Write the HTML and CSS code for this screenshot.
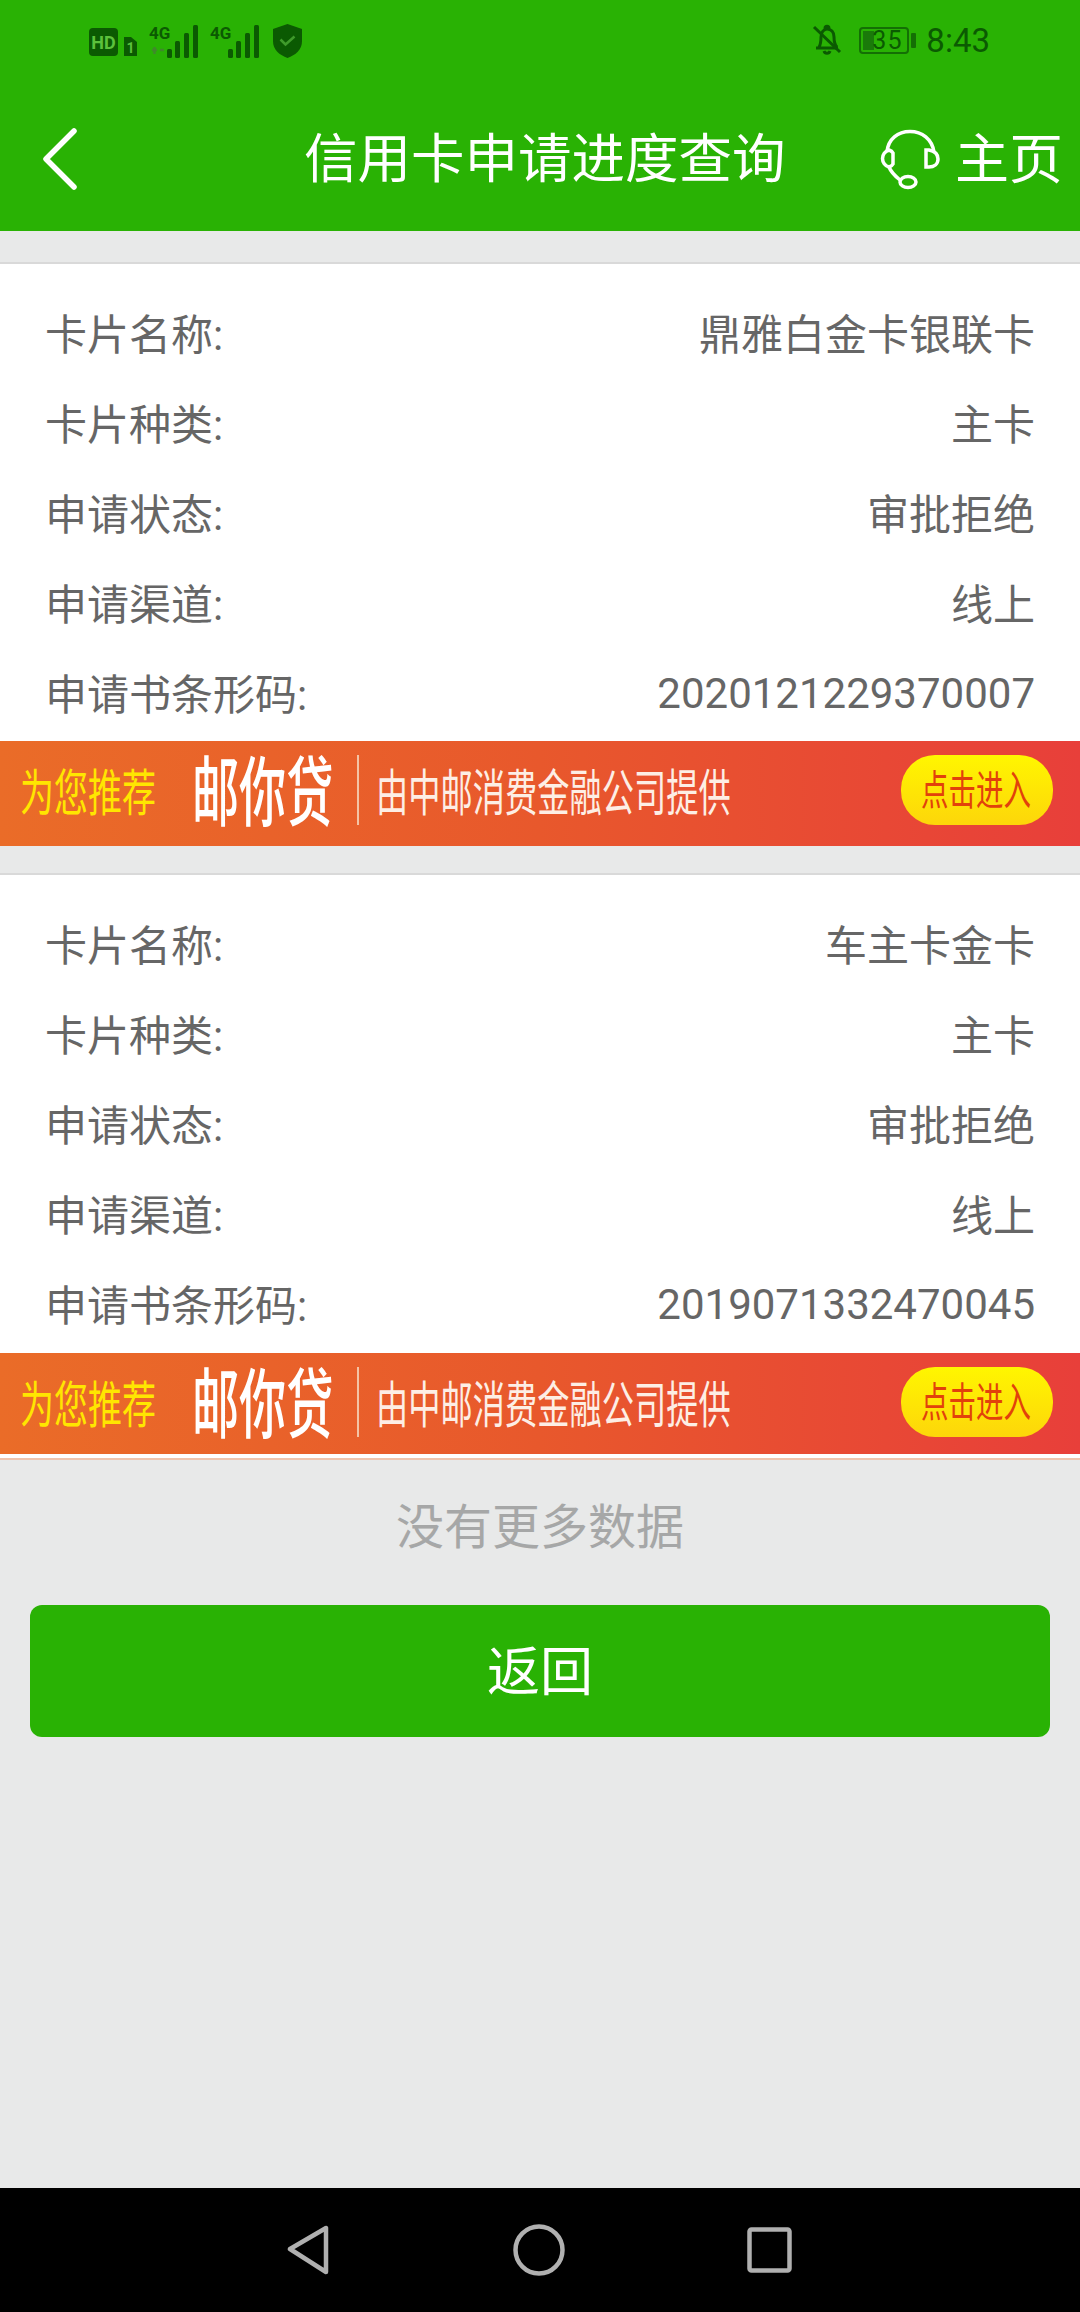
FILE: index.html
```html
<!DOCTYPE html>
<html lang="zh">
<head>
<meta charset="utf-8">
<title>信用卡申请进度查询</title>
<link rel="stylesheet" href="styles.css">
</head>
<body>
<header class="header">
  <div class="status">
    <div class="status-left">
      <svg class="i-hd" width="48" height="30" viewBox="0 0 48 30">
        <rect x="0" y="1" width="29" height="28" rx="4" fill="#0b5a02"/>
        <text x="14.500" y="22" class="hd-text">HD</text>
        <path d="M35 10h7l6 5v14h-13z" fill="#0b5a02"/>
        <text x="41.500" y="26" class="sim-text">1</text>
      </svg>
      <svg class="i-sig" width="52" height="34" viewBox="0 0 52 34">
        <text x="0" y="15" class="sig-text">4G</text>
        <path d="M3 26h5M5.500 23v7M11 26h4" stroke="#3f8a2b" stroke-width="2.500" fill="none"/>
        <g fill="#0b5a02"><rect x="18" y="25" width="5" height="9" rx="1.500"/><rect x="26" y="17" width="5" height="17" rx="1.500"/><rect x="35" y="9" width="5" height="25" rx="1.500"/><rect x="44" y="1" width="5" height="33" rx="1.500"/></g>
      </svg>
      <svg class="i-sig" width="52" height="34" viewBox="0 0 52 34">
        <text x="0" y="15" class="sig-text">4G</text>
        <g fill="#0b5a02"><rect x="18" y="25" width="5" height="9" rx="1.500"/><rect x="26" y="17" width="5" height="17" rx="1.500"/><rect x="35" y="9" width="5" height="25" rx="1.500"/><rect x="44" y="1" width="5" height="33" rx="1.500"/></g>
      </svg>
      <svg class="i-shield" width="29" height="34" viewBox="0 0 29 34">
        <path d="M14.500 0L29 5v12c0 9-6.500 14-14.500 17C6.500 31 0 26 0 17V5z" fill="#0b5a02"/>
        <path d="M7.500 15.500l5 5 9-8" fill="none" stroke="#3f9a2b" stroke-width="2.500"/>
      </svg>
    </div>
    <div class="status-right">
      <svg width="30" height="32" viewBox="0 0 30 32">
        <path d="M4 24h22M7 23c2-3 2-6 2-10 0-5 3-8 6-8 4 0 7 3 7 8 0 4 0 7 3 10M13 4.500c0-3 4-3 4 0M12 27c1 3 5 3 6 0" fill="none" stroke="#0b5a02" stroke-width="3"/>
        <path d="M2 3l26 25" stroke="#0b5a02" stroke-width="3"/>
      </svg>
      <div class="battery">
        <div class="battery-fill"></div>
        <span class="battery-num">35</span>
      </div>
      <div class="battery-nub"></div>
      <span class="clock">8:43</span>
    </div>
  </div>
  <nav class="topnav">
    <svg class="back" width="40" height="66" viewBox="0 0 40 66">
      <path d="M36 5L8 33l28 28" fill="none" stroke="#fff" stroke-width="5.500" stroke-linecap="round" stroke-linejoin="round"/>
    </svg>
    <h1 class="title">信用卡申请进度查询</h1>
    <div class="home">
      <svg width="62" height="62" viewBox="0 0 62 62">
        <path d="M7 23C8 10 18 2.500 30 2.500S52 10 54 23" fill="none" stroke="#fff" stroke-width="3.500"/>
        <path d="M9 21C5 22 2.500 26 2.500 29.500S5 37 9 38c3-1 4-3 4-3V24s-1-2-4-3zM46 21h3c5 1 9 4 9 9s-4 8-9 8h-3z" fill="none" stroke="#fff" stroke-width="3.500"/>
        <path d="M9 38c2 5 6 9 11 13" fill="none" stroke="#fff" stroke-width="3.500"/>
        <ellipse cx="28" cy="53" rx="8" ry="5.500" fill="none" stroke="#fff" stroke-width="3.500"/>
      </svg>
      <span class="home-text">主页</span>
    </div>
  </nav>
</header>

<main class="main">
  <section class="card">
    <div class="row"><span>卡片名称:</span><span>鼎雅白金卡银联卡</span></div>
    <div class="row"><span>卡片种类:</span><span>主卡</span></div>
    <div class="row"><span>申请状态:</span><span>审批拒绝</span></div>
    <div class="row"><span>申请渠道:</span><span>线上</span></div>
    <div class="row"><span>申请书条形码:</span><span class="num">2020121229370007</span></div>
    <div class="banner">
      <span class="b-rec">为您推荐</span>
      <span class="b-name">邮你贷</span>
      <span class="b-sep"></span>
      <span class="b-desc">由中邮消费金融公司提供</span>
      <span class="b-btn"><span class="b-btn-text">点击进入</span></span>
    </div>
  </section>
  <section class="card card-last">
    <div class="row"><span>卡片名称:</span><span>车主卡金卡</span></div>
    <div class="row"><span>卡片种类:</span><span>主卡</span></div>
    <div class="row"><span>申请状态:</span><span>审批拒绝</span></div>
    <div class="row"><span>申请渠道:</span><span>线上</span></div>
    <div class="row"><span>申请书条形码:</span><span class="num">2019071332470045</span></div>
    <div class="banner banner-last">
      <span class="b-rec">为您推荐</span>
      <span class="b-name">邮你贷</span>
      <span class="b-sep"></span>
      <span class="b-desc">由中邮消费金融公司提供</span>
      <span class="b-btn"><span class="b-btn-text">点击进入</span></span>
    </div>
  </section>
  <p class="nomore">没有更多数据</p>
  <button class="return">返回</button>
</main>

<footer class="sysnav">
  <svg width="44" height="50" viewBox="0 0 44 50">
    <path d="M3 24L39 3v44z" fill="none" stroke="#b0b0b0" stroke-width="4.500" stroke-linejoin="round"/>
  </svg>
  <svg width="52" height="52" viewBox="0 0 52 52">
    <circle cx="26" cy="26" r="23.500" fill="none" stroke="#b0b0b0" stroke-width="4.500"/>
  </svg>
  <svg width="45" height="46" viewBox="0 0 45 46">
    <rect x="2.500" y="2.500" width="40" height="41" rx="2" fill="none" stroke="#b0b0b0" stroke-width="4.500"/>
  </svg>
</footer>
</body>
</html>
```
FILE: styles.css
```css
* { box-sizing: border-box; }
html, body { margin: 0; padding: 0; }
body {
  width: 1080px;
  height: 2312px;
  display: flex;
  flex-direction: column;
  background: #e8e9e9;
  font-family: Roboto, "Noto Sans CJK SC", sans-serif;
  overflow: hidden;
}
.header {
  height: 231px;
  background: #29b204;
  flex: none;
}
.status {
  height: 70px;
  padding: 24px 90px 0 89px;
  display: flex;
  justify-content: space-between;
  align-items: flex-start;
}
.status-left { display: flex; align-items: flex-start; }
.i-hd { margin-top: 3px; margin-right: 12px; }
.i-sig { margin-right: 9px; }
.i-shield { margin-left: 2px; }
.hd-text { font: 700 18px "Roboto", sans-serif; fill: #5cc13c; text-anchor: middle; }
.sim-text { font: 700 14px "Roboto", sans-serif; fill: #5cc13c; text-anchor: middle; }
.sig-text { font: 700 17px "Roboto", sans-serif; fill: #0b5a02; }
.status-right { display: flex; align-items: flex-start; }
.status-right svg { margin-right: 17px; }
.battery {
  position: relative;
  width: 50px;
  height: 27px;
  margin-top: 3px;
  border: 2px solid #146f05;
  border-radius: 4px;
  padding: 2px;
}
.battery-fill { width: 11px; height: 100%; background: #1a7a0a; }
.battery-num {
  position: absolute;
  left: 11px;
  top: -3px;
  font: 400 25px/29px "Roboto", sans-serif;
  letter-spacing: 1px;
  color: #0b5a02;
}
.battery-nub {
  width: 5px;
  height: 15px;
  margin: 9px 0 0 2px;
  background: #146f05;
  border-radius: 1px;
}
.clock {
  margin: -3px 0 0 10px;
  font: 400 33px/40px "Roboto", sans-serif;
  color: #0b5a02;
}
.topnav {
  height: 161px;
  padding: 56px 14px 0 38px;
  display: flex;
  align-items: flex-start;
}
.back { flex: none; }
.title {
  flex: none;
  width: 482px;
  margin: 2px 0 0 226px;
  font-size: 53.500px;
  font-weight: 400;
  line-height: 64px;
  color: #fff;
  white-space: nowrap;
}
.home { display: flex; align-items: center; margin-left: 94px; }
.home-text {
  margin: 3px 0 0 13px;
  font-size: 54px;
  line-height: 64px;
  color: #fff;
  white-space: nowrap;
}
.main { flex: 1; padding-top: 31px; }
.card {
  background: #fff;
  border-top: 2px solid #d9d9d9;
  margin-bottom: 27px;
  padding-top: 22px;
}
.card-last {
  margin-bottom: 0;
  padding-bottom: 4px;
  border-bottom: 2px solid #efc4ae;
}
.row {
  height: 90px;
  padding: 0 45px;
  display: flex;
  justify-content: space-between;
  align-items: center;
  font-size: 42px;
  color: #666;
  white-space: nowrap;
}
.num { padding-top: 5px; }
.banner {
  height: 105px;
  margin-top: 5px;
  padding-bottom: 8px;
  display: flex;
  align-items: center;
  background: linear-gradient(90deg, #ea6c28 0%, #e8582c 50%, #e83f3a 100%);
}
.banner-last { height: 101px; margin-top: 6px; padding-bottom: 4px; }
.b-rec, .b-name, .b-desc, .b-btn-text {
  flex: none;
  display: inline-block;
  line-height: 1;
  transform-origin: left center;
  white-space: nowrap;
}
.b-rec, .b-name, .b-desc { margin-top: 8px; }
.b-rec {
  margin-left: 20px;
  margin-right: -28px;
  font-size: 50px;
  color: #ffe600;
  transform: scaleX(0.68);
}
.b-name {
  margin-right: -63px;
  font-size: 76px;
  font-weight: 500;
  color: #fff;
  transform: scaleX(0.62);
}
.b-sep { flex: none; width: 2px; height: 70px; background: #f4c3a5; }
.b-desc {
  margin-left: 17px;
  margin-right: -25px;
  font-size: 50px;
  color: #fdeee5;
  transform: scaleX(0.645);
}
.b-btn {
  flex: none;
  width: 152px;
  height: 70px;
  border-radius: 34px;
  display: flex;
  align-items: center;
  padding-left: 20px;
  background: linear-gradient(180deg, #fff600 0%, #fdd60a 100%);
}
.b-btn-text {
  margin-top: 4px;
  margin-right: -55px;
  font-size: 41px;
  color: #e2410b;
  transform: scaleX(0.67);
}
.nomore {
  margin: 34px 0 0;
  text-align: center;
  font-size: 48px;
  line-height: 68px;
  color: #a6a7a7;
}
.return {
  display: block;
  width: 1020px;
  height: 132px;
  margin: 43px 30px 0;
  padding: 0 0 7px;
  border: 0;
  border-radius: 12px;
  background: #29b204;
  color: #fff;
  font-family: inherit;
  font-size: 53px;
}
.sysnav {
  height: 124px;
  flex: none;
  background: #000;
  display: flex;
  align-items: center;
  padding: 0 0 0 287px;
  gap: 182px;
}
```
